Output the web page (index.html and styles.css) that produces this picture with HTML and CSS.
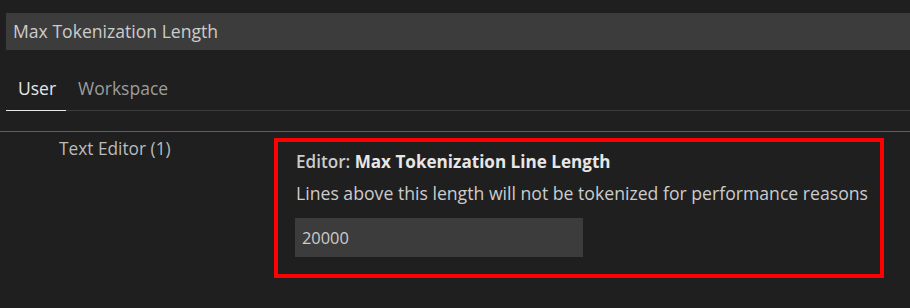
FILE: index.html
```html
<!DOCTYPE html>
<html>
<head>
<meta charset="utf-8">
<link rel="stylesheet" href="styles.css">
</head>
<body>
<div class="search">Max Tokenization Length</div>
<div class="tabs">
  <div class="tab active">User</div>
  <div class="tab">Workspace</div>
</div>
<div class="divider"></div>
<div class="content">
  <div class="toc">Text Editor (1)</div>
  <div class="setting">
    <div class="title"><span class="cat">Editor: </span><span class="name">Max Tokenization Line Length</span></div>
    <div class="desc">Lines above this length will not be tokenized for performance reasons</div>
    <div class="input">20000</div>
  </div>
</div>
</body>
</html>
```
FILE: styles.css
```css
html, body {
  margin: 0;
  padding: 0;
  background: #1f1f1f;
  font-family: "Open Sans", "Noto Sans", sans-serif;
  color: #cccccc;
}
body {
  padding-top: 13px;
  height: 308px;
  box-sizing: border-box;
  overflow: hidden;
}
.search {
  margin-left: 6px;
  height: 37px;
  background: #3c3c3c;
  padding-left: 7px;
  font-size: 17.6px;
  line-height: 37px;
  color: #cccccc;
  white-space: nowrap;
}
.tabs {
  margin-left: 6px;
  margin-top: 18px;
  display: flex;
  border-bottom: 1px solid #3c3c3c;
}
.tab {
  padding: 8px 10px 10px 12px;
  font-size: 17.5px;
  line-height: 24px;
  color: #9d9d9d;
  border-bottom: 1px solid transparent;
  margin-bottom: -1px;
}
.tab.active {
  color: #e7e7e7;
  border-bottom-color: #e7e7e7;
}
.divider {
  margin-top: 20px;
  height: 1px;
  background: #0078d4;
}
.content {
  display: flex;
  padding-left: 59px;
}
.toc {
  width: 215px;
  margin-top: 6px;
  font-size: 17.3px;
  line-height: 22px;
  color: #bbbbbb;
}
.setting {
  margin-top: 6px;
  width: 610px;
  height: 140px;
  box-sizing: border-box;
  border: 4px solid #ff0000;
  padding: 9px 0 0 18px;
  font-size: 17.65px;
  line-height: 22px;
}
.title {
  font-size: 17.1px;
  font-weight: 600;
  color: #cccccc;
}
.title .name {
  font-weight: 700;
  color: #e7e7e7;
}
.desc {
  margin-top: 9px;
  color: #cccccc;
  white-space: nowrap;
}
.input {
  margin-top: 14px;
  margin-left: -1px;
  width: 288px;
  height: 39px;
  box-sizing: border-box;
  background: #3c3c3c;
  padding: 9px 0 0 7px;
  font-size: 16.4px;
  line-height: 22px;
  color: #cccccc;
}
```
